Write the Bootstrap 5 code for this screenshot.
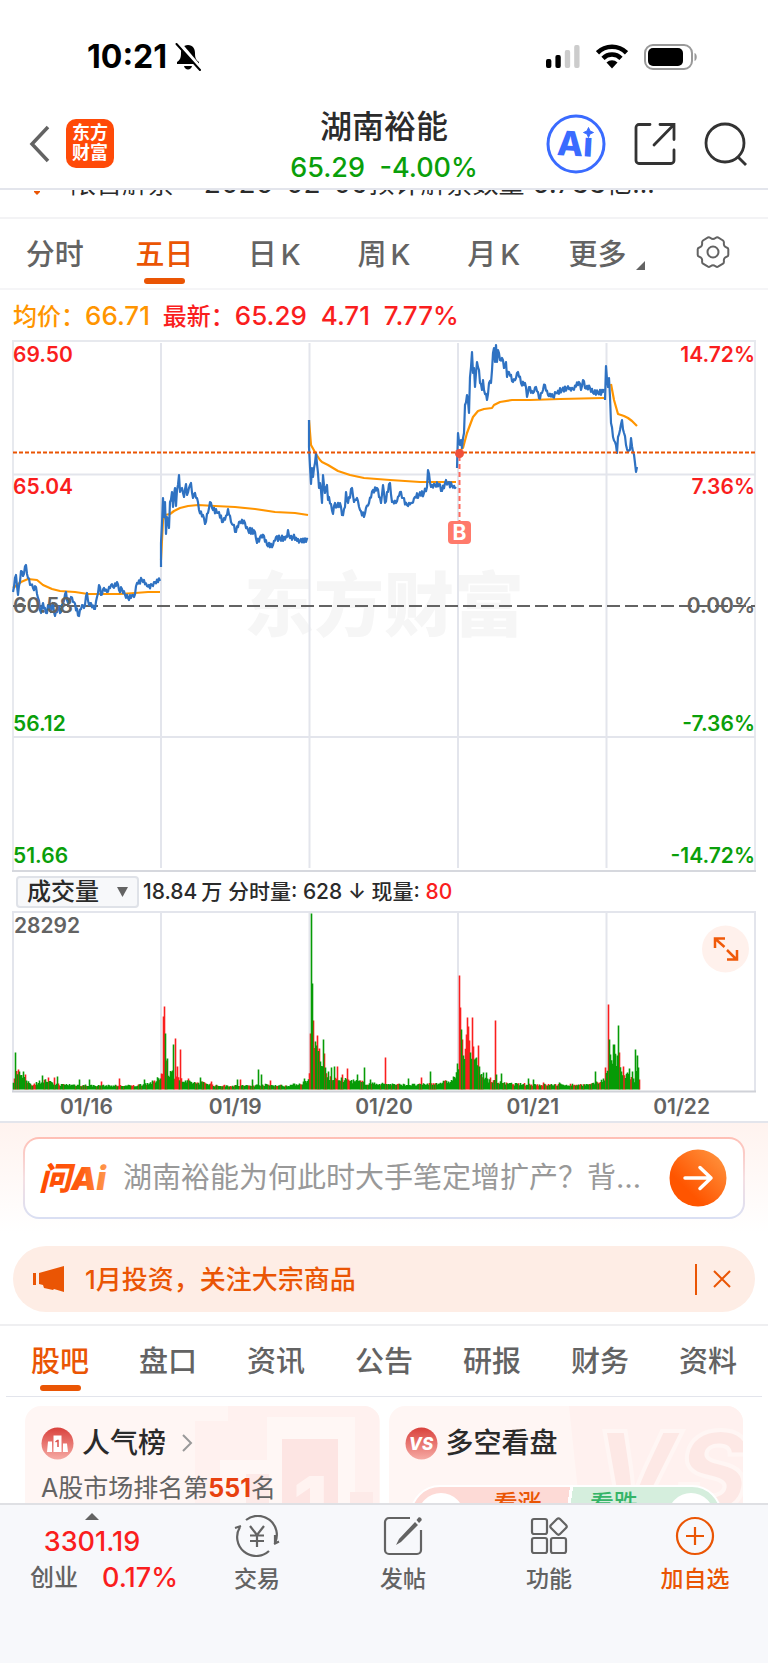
<!DOCTYPE html>
<html lang="zh-CN">
<head>
<meta charset="utf-8">
<meta name="viewport" content="width=device-width, initial-scale=1">
<title>湖南裕能</title>
<link href="https://cdn.jsdelivr.net/npm/bootstrap@5.3.0/dist/css/bootstrap.min.css" rel="stylesheet">
<style>
  :root { --brand: #ea5504; --rise: #fa1e1e; --fall: #0a9f0a; --ink: #2b2b2b; --muted: #636363; --rule: #e3e5ec; }
  body { font-family: Inter, "Noto Sans CJK SC", sans-serif; color: var(--ink); background: #fff; height: 100vh; }
  body > * { flex-shrink: 0; }
  a { text-decoration: none; color: inherit; }
  svg { display: block; flex: none; }
  .rise { color: var(--rise); }
  .fall { color: var(--fall); }
  .brand { color: var(--brand); }
  .status { height: 104px; padding: 10px 70px 0 87px; color: #000; }
  .clock { font-size: 32px; line-height: 40px; font-weight: 700; }
  .topbar { display: grid; grid-template-columns: 1fr auto 1fr; height: 86px; border-bottom: 2px solid var(--rule); padding: 0 20px; }
  .topbar .side { padding-bottom: 6px; }
  .applogo { width: 48px; height: 49px; border-radius: 10px; background: #ff4a08; color: #fff; font-size: 18px; line-height: 20px; font-weight: 700; text-align: center; padding-top: 4px; }
  .stock { font-size: 32px; line-height: 40px; font-weight: 500; margin: 3px 0 0; }
  .quote { font-size: 27px; line-height: 42px; font-weight: 500; white-space: pre; }
  .notice { height: 29px; overflow: hidden; border-bottom: 2px solid #f3f3f5; }
  .notice-text { font-size: 26px; line-height: 30px; margin-top: -22px; padding-left: 34px; white-space: pre; }
  .notice-text b { font-size: 28px; font-weight: 400; }
  .tabs { font-size: 29px; color: var(--muted); font-weight: 500; height: 71px; }
  .tabs a { flex: 1 1 0; text-align: center; line-height: 40px; padding-top: 16px; display: flex; flex-direction: column; align-items: center; }
  .tabs .on { color: var(--brand); }
  .tabs .on::after { content: ""; width: 41px; height: 6px; border-radius: 3px; background: var(--brand); margin-top: 3px; }
  .period { border-bottom: 2px solid #f5f5f7; }
  .legend-row { font-size: 24px; line-height: 52px; height: 50px; padding-left: 13px; font-weight: 500; white-space: pre; }
  .legend-row b { font-size: 26px; font-weight: 500; }
  .avg { color: #ff9500; }
  .plots { padding: 0 12px; }
  .plot { width: 100%; height: auto; }
  .plot text { font-family: Inter, "Noto Sans CJK SC", sans-serif; font-size: 21px; font-weight: 600; }
  .volbar { height: 39px; padding-left: 4px; font-size: 21px; font-weight: 500; white-space: pre; }
  .volbtn { font-size: 24px; line-height: 28px; font-weight: 500; width: 123px; height: 32px; padding: 0 9px; border: 2px solid #dfe2e8; border-radius: 4px; background: #f7f8fa; color: var(--ink); }
  .dates { line-height: 28px; font-size: 21px; font-weight: 600; color: var(--muted); }
  .dates span { flex: 1 1 0; text-align: center; }
  .ask { border-top: 2px solid var(--rule); background: linear-gradient(#fff3ef, #fff 110px); padding: 14px 23px 27px; }
  .askbox { height: 82px; border: 2px solid transparent; border-radius: 16px; padding: 0 16px 0 14px; background: linear-gradient(#fff, #fff) padding-box, linear-gradient(#ffbfb5, #f5dfe2 50%, #d9dff3) border-box; }
  .askbox input { border: 0; outline: 0; background: none; font-size: 29px; line-height: 40px; padding: 0; min-width: 0; }
  .askbox input::placeholder { color: #999; opacity: 1; }
  .plain { border: 0; background: none; padding: 0; }
  .promo { margin: 0 13px; height: 66px; border-radius: 33px; background: #feede5; color: var(--brand); padding: 0 24px 0 20px; font-size: 26px; font-weight: 500; }
  .promo .bar { width: 2px; height: 31px; background: var(--brand); }
  .sections { margin: 12px 0 0; border-top: 2px solid #efeff1; padding: 0 6px; }
  .sections .tabs { border-bottom: 1px solid var(--rule); }
  .feed { flex: 1 1 0; min-height: 0; padding: 9px 25px 0; gap: 9px; }
  .tile { flex: 1 1 0; height: 190px; border-radius: 16px; background: #fff6f4; position: relative; overflow: hidden; }
  .tile .art { position: absolute; inset: 0; }
  .tile-body { position: relative; padding: 17px 16px; }
  .tile h2 { font-size: 28px; line-height: 40px; font-weight: 500; margin: 0; }
  .rank { font-size: 25px; line-height: 34px; color: var(--muted); margin-top: 8px; }
  .rank b { color: #e8410f; }
  .vote { position: relative; margin: 22px 5px 0 5px; height: 60px; border: 2px solid #fff; border-radius: 30px; overflow: hidden; font-size: 24px; line-height: 34px; font-weight: 500; background: linear-gradient(98deg, #fddad6 50%, #fff 50%, #fff 51%, #d5eedd 51%); }
  .vote span { flex: 1 1 0; text-align: center; }
  .down { color: #35b467; }
  .knob { width: 46px; height: 46px; border-radius: 50%; background: #fff; margin: 6px; }
  .dock { background: #f7f8fb; border-top: 2px solid #dfe0e4; height: 160px; color: var(--muted); font-size: 24px; line-height: 36px; font-weight: 500; }
  .dock .index { flex: 184 1 0; }
  .dock .act { flex: 146 1 0; padding-top: 10px; gap: 4px; font-size: 23px; }
  .idxnum { font-size: 27px; }
</style>
</head>
<body class="d-flex flex-column overflow-hidden">
<div class="status d-flex align-items-center justify-content-between">
  <div class="d-flex align-items-center gap-2">
    <span class="clock">10:21</span>
    <svg width="27" height="28" viewBox="0 0 27 28"><path d="M13 2c-5 0-7 4-7 8 0 5-1 7-4 9v2h22v-2c-3-2-4-4-4-9 0-4-2-8-7-8z" fill="#000"/><path d="M9 23h8c-.5 2-2 3.500-4 3.500S9.500 25 9 23z" fill="#000"/><path d="M4 0l22 26" stroke="#fff" stroke-width="4"/><path d="M1.500 1L25 27" stroke="#000" stroke-width="2" stroke-linecap="round"/></svg>
  </div>
  <div class="d-flex align-items-center gap-3">
    <svg width="34" height="26" viewBox="0 0 38 26" preserveAspectRatio="none"><g><rect x="0" y="15" width="6" height="9" rx="2"/><rect x="10.500" y="11" width="6" height="13" rx="2"/><rect x="21" y="6" width="6" height="18" rx="2" fill="#ccc"/><rect x="31.500" y="1" width="6" height="23" rx="2" fill="#ccc"/></g></svg>
    <svg width="32" height="26" viewBox="0 0 32 26"><g fill="none" stroke="#000" stroke-width="4.500"><path d="M1.500 8.800a20.500 20.500 0 0 1 29 0"/><path d="M7 14.300a12.700 12.700 0 0 1 18 0"/></g><path d="M10.500 18.500a8 8 0 0 1 11 0L16 24.500z"/></svg>
    <svg width="54" height="26" viewBox="0 0 54 26"><rect x="1" y="1" width="47" height="24" rx="8" fill="none" stroke="#999" stroke-width="2"/><rect x="4" y="4" width="35" height="18" rx="5"/><path d="M50.500 9c3 1 3 7 0 8z" fill="#999"/></svg>
  </div>
</div>

<header class="topbar">
  <div class="side d-flex align-items-center gap-3 ps-2">
    <button class="plain" aria-label="返回"><svg width="22" height="38" viewBox="0 0 22 38"><path d="M20 2L4 19l16 17" fill="none" stroke="#636363" stroke-width="3.500"/></svg></button>
    <a href="#" class="applogo">东方<br>财富</a>
  </div>
  <div class="text-center">
    <h1 class="stock">湖南裕能</h1>
    <div class="quote fall">65.29  -4.00%</div>
  </div>
  <div class="side d-flex align-items-center justify-content-end">
    <button class="plain me-4" aria-label="Ai"><svg width="60" height="60" viewBox="0 0 60 60"><circle cx="30" cy="30" r="28" fill="#fff" stroke="#3a6bff" stroke-width="3"/><text x="29" y="42" text-anchor="middle" font-family="Inter" font-weight="800" font-size="34" fill="#3a6bff" transform="rotate(3 30 30)">Ai</text><circle cx="42" cy="17" r="6" fill="#fff"/><path d="M42.500 13.500l1.500 3.500 3.500 1.500-3.500 1.500-1.500 3.500-1.500-3.500-3.500-1.500 3.500-1.500z" fill="#3a6bff" stroke="#3a6bff"/></svg></button>
    <button class="plain me-4 ms-1" aria-label="分享"><svg width="42" height="44" viewBox="0 0 42 44"><path d="M16 2.500H5a3 3 0 0 0-3 3v33a3 3 0 0 0 3 3h32a3 3 0 0 0 3-3V28M26 2.500h14v15M40 2.500L20 23" fill="none" stroke="#333" stroke-width="2.800" stroke-linecap="round"/></svg></button>
    <button class="plain ms-1" aria-label="搜索"><svg width="44" height="44" viewBox="0 0 44 44"><g fill="none" stroke="#333" stroke-width="2.800"><circle cx="21" cy="21" r="19"/><path d="M34 35l8 8"/></g></svg></button>
  </div>
</header>

<div class="notice"><div class="notice-text d-flex align-items-end"><svg class="me-4" width="8" height="8" viewBox="0 0 8 8"><path d="M0 0h6v1L3 4 0 1z" fill="#ea5504"/></svg><span class="ms-1">限售解禁   <b> 2026-02-09</b>预计解禁数量<b> 5.733</b>亿…</span></div></div>

<nav class="tabs period d-flex">
  <a href="#">分时</a><a href="#" class="on">五日</a><a href="#"><span>日<span class="ms-1">K</span></span></a><a href="#"><span>周<span class="ms-1">K</span></span></a><a href="#"><span>月<span class="ms-1">K</span></span></a>
  <a href="#"><span class="d-flex align-items-end ms-2">更多<svg class="ms-2 mb-1" width="12" height="12" viewBox="0 0 12 12"><path d="M11 2v9H2z" fill="#636363"/></svg></span></a>
  <a href="#" aria-label="设置"><svg width="34" height="34" viewBox="0 0 34 34"><g fill="none" stroke="#636363" stroke-width="2"><path d="M12 2.500c2-1 2.500 1.500 5 1.500s3-2.500 5-1.500l5 3c2 1.500 0 3 1.300 5.300s4 1.200 4 3.500v5.600c0 2.300-2.700 1.200-4 3.500s.7 3.800-1.300 5.300l-5 3c-2 1-2.500-1.500-5-1.500s-3 2.500-5 1.500l-5-3c-2-1.500 0-3-1.300-5.300s-4-1.200-4-3.500v-5.600c0-2.300 2.700-1.200 4-3.500S5 7 7 5.500z"/><circle cx="17" cy="17" r="5.500"/></g></svg></a>
</nav>

<div class="legend-row"><span class="avg">均价：<b>66.71</b></span>  <span class="rise">最新：<b>65.29  4.71  7.77%</b></span></div>

<div class="plots">
  <svg class="plot" viewBox="12 340 744 532" id="price">
    <text x="384" y="631" text-anchor="middle" fill="#f6f6f6" style="font-size:70px;font-weight:900">东方财富</text>
    <g fill="none" stroke="#e3e5ec" stroke-width="2"><path d="M13 871V341H755V871" stroke="#e7e9ee"/><path d="M161 343V868M309.500 343V868M458 343V868M606.500 343V868M13 474.500H755M13 737H755"/><path d="M12 871H756" stroke="#d6d8de"/></g>
    <path d="M13 606H755" stroke="#636363" stroke-width="2" stroke-dasharray="13 5"/>
    <g id="lines" fill="none" stroke-width="2.200" stroke-linejoin="round"></g>
    <path d="M13 452.500H755" stroke="#ea5504" stroke-width="2" stroke-dasharray="4 2"/>
    <path d="M459.500 456V522" stroke="#ff6b5e" stroke-width="2" stroke-dasharray="5 3"/>
    <circle cx="459.500" cy="453.500" r="4.500" fill="#f0503a"/>
    <rect x="448" y="521" width="23" height="23" rx="4" fill="#ff7a6b"/>
    <text x="459.500" y="540" text-anchor="middle" fill="#fff" style="font-weight:700">B</text>
    <g fill="#fa1e1e"><text x="13" y="362">69.50</text><text x="13" y="494">65.04</text><g text-anchor="end"><text x="755" y="362">14.72%</text><text x="755" y="494">7.36%</text></g></g>
    <g fill="#636363"><text x="13" y="613">60.58</text><text x="755" y="613" text-anchor="end">0.00%</text></g>
    <g fill="#0a9f0a"><text x="13" y="731">56.12</text><text x="13" y="863">51.66</text><g text-anchor="end"><text x="755" y="731">-7.36%</text><text x="755" y="863">-14.72%</text></g></g>
  </svg>
  <div class="volbar d-flex align-items-center">
    <button class="volbtn d-flex align-items-center justify-content-between me-1">成交量<svg width="11" height="10" viewBox="0 0 11 10"><path d="M0 0h11L5.500 10z" fill="#636363"/></svg></button>
    <span>18.84<span class="ms-1">万</span> 分时量: 628 ↓ 现量: <span class="rise">80</span></span>
  </div>
  <svg class="plot" viewBox="12 911 744 182" id="volume">
    <g fill="none" stroke="#e3e5ec" stroke-width="2"><path d="M13 1091V912H755V1091"/><path d="M161 913V1089M309.500 913V1089M458 913V1089M606.500 913V1089"/><path d="M12 1091.500H756" stroke="#d0d2d8"/></g>
    <g id="bars"></g>
    <text x="14" y="933" fill="#636363">28292</text>
    <a href="#"><circle cx="725.500" cy="949" r="23.500" fill="#fff1ec"/><path d="M715 948v-9.500h10M715.500 939l9 8M737 950v9.500h-10M736 959l-9-9" fill="none" stroke="#f05a0a" stroke-width="2.500"/></a>
  </svg>
  <div class="dates d-flex"><span>01/16</span><span>01/19</span><span>01/20</span><span>01/21</span><span>01/22</span></div>
</div>

<div class="ask">
  <div class="askbox d-flex align-items-center">
    <svg width="68" height="36" viewBox="0 0 68 36"><defs><linearGradient id="warm"><stop offset="0" stop-color="#ff4a00"/><stop offset=".6" stop-color="#ff5a10"/><stop offset="1" stop-color="#ff9a50"/></linearGradient></defs><text x="0" y="30" fill="url(#warm)" font-size="32" font-weight="900" font-style="italic" font-family="Inter, 'Noto Sans CJK SC', sans-serif">问Ai</text></svg>
    <input class="flex-fill ms-3 me-4" aria-label="问Ai" placeholder="湖南裕能为何此时大手笔定增扩产？背…">
    <button class="plain" aria-label="发送"><svg width="58" height="58" viewBox="0 0 58 58"><defs><linearGradient id="go" x1="0" y1="1" x2="1" y2="0"><stop offset=".3" stop-color="#ff5500"/><stop offset="1" stop-color="#ff9a45"/></linearGradient></defs><circle cx="29" cy="29" r="28.500" fill="url(#go)"/><path d="M16 29h26M31 18.500L42 29 31 39.500" fill="none" stroke="#fff" stroke-width="3.500" stroke-linecap="round" stroke-linejoin="round"/></svg></button>
  </div>
</div>

<div class="promo d-flex align-items-center">
  <svg width="32" height="28" viewBox="0 0 32 28"><path d="M0 8h3v12H0zM6 8L31 1v26l-10-3-1 1-9-2-1-3-4-1z" fill="#ea5504"/></svg>
  <a href="#" class="ms-3 ps-1 flex-fill">1月投资，关注大宗商品</a>
  <span class="bar me-3"></span>
  <button class="plain" aria-label="关闭"><svg width="18" height="18" viewBox="0 0 18 18"><path d="M1 1l16 16M17 1L1 17" stroke="#ea5504" stroke-width="2"/></svg></button>
</div>

<div class="sections">
  <nav class="tabs d-flex"><a href="#" class="on">股吧</a><a href="#">盘口</a><a href="#">资讯</a><a href="#">公告</a><a href="#">研报</a><a href="#">财务</a><a href="#">资料</a></nav>
</div>

<main class="feed d-flex overflow-hidden">
  <section class="tile">
    <svg class="art" width="354" height="190" viewBox="0 0 354 190"><path d="M203 0H354V190H170V15H203z" fill="#fff1ef"/><path d="M242 190V11H330V190M195 190V54H242V190" fill="#fff7f5"/><path d="M257 33H313V190H257z" fill="#fde5e3"/><path d="M221 68H244V190H221zM325 86H348V190H325z" fill="#fdeae8"/><text x="268" y="128" font-family="Inter" font-weight="800" font-size="80" fill="#fff3f1">1</text></svg>
    <div class="tile-body">
      <div class="d-flex align-items-center">
        <svg width="33" height="33" viewBox="0 0 33 33"><defs><linearGradient id="rose" x2="0" y2="1"><stop stop-color="#d9413c"/><stop offset="1" stop-color="#f6aaa4"/></linearGradient></defs><circle cx="16.500" cy="16.500" r="16" fill="url(#rose)"/><path d="M7 14.500h4V25H6zM12.500 8.500h8V25h-8zM22 16.500h4l1 8.500h-5z" fill="#fff"/><path d="M14.500 15l2-1.500h.5V20" stroke="#d9524c" stroke-width="1.500" fill="none"/></svg>
        <h2 class="ms-2">人气榜</h2>
        <svg class="ms-3" width="11" height="18" viewBox="0 0 11 18"><path d="M1 1l8 8-8 8" fill="none" stroke="#999" stroke-width="2"/></svg>
      </div>
      <div class="rank">A股市场排名第<b>551</b>名</div>
    </div>
  </section>
  <section class="tile">
    <svg class="art" width="354" height="190" viewBox="0 0 354 190"><path d="M180 0H354V190H200z" fill="#fff1ef"/><text x="205" y="104" font-family="Inter" font-weight="800" font-style="italic" font-size="108" fill="#fde8e5" stroke="#fff6f4" stroke-width="4">VS</text></svg>
    <div class="tile-body">
      <div class="d-flex align-items-center">
        <svg width="33" height="33" viewBox="0 0 33 33"><circle cx="16.500" cy="16.500" r="16" fill="url(#rose)"/><text x="16" y="23" text-anchor="middle" font-family="Inter" font-weight="800" font-style="italic" font-size="17" fill="#fff">VS</text></svg>
        <h2 class="ms-2">多空看盘</h2>
      </div>
      <div class="vote d-flex"><i class="knob"></i><span class="brand">看涨</span><span class="down">看跌</span><i class="knob"></i></div>
    </div>
  </section>
</main>

<footer class="dock d-flex">
  <a href="#" class="index d-flex flex-column align-items-center">
    <svg class="mt-2" width="14" height="7" viewBox="0 0 14 7"><path d="M7 0l7 7H0z" fill="#636363"/></svg>
    <span class="idxnum rise mt-1">3301.19</span>
    <span class="d-flex ms-4">创业<span class="idxnum rise ms-4">0.17%</span></span>
  </a>
  <a href="#" class="act d-flex flex-column align-items-center"><svg width="46" height="42" viewBox="0 0 46 42"><g fill="none" stroke="#636363" stroke-width="2.200"><path d="M12 5a19 19 0 0 1 29 23M35 36A19 19 0 0 1 6 12M1 13l6-2M40 29l5-2.500M41 28v-8"/><path d="M16 11l7 9 7-9M23 20v12M16 20.500h14M16 26h14"/></g></svg>交易</a>
  <a href="#" class="act d-flex flex-column align-items-center"><svg width="40" height="42" viewBox="0 0 40 42"><path d="M27 3H6a4 4 0 0 0-4 4v28a4 4 0 0 0 4 4h28a4 4 0 0 0 4-4V15" fill="none" stroke="#636363" stroke-width="2.200"/><path d="M32 7l3 3-17 17-5 3 3-6zM33.500 5l2-2.500c1.500-1 4 1 3 3L36 8z" fill="#636363"/></svg>发帖</a>
  <a href="#" class="act d-flex flex-column align-items-center"><svg width="38" height="42" viewBox="0 0 38 42"><g fill="none" stroke="#636363" stroke-width="2.200"><rect x="2" y="4" width="15" height="15" rx="2"/><rect x="2" y="23" width="15" height="15" rx="2"/><rect x="21" y="23" width="15" height="15" rx="2"/><path d="M27 4q1.500-1.500 3 0l6 6q1.500 1.500 0 3l-6 6q-1.500 1.500-3 0l-6-6q-1.500-1.500 0-3z"/></g></svg>功能</a>
  <a href="#" class="act brand d-flex flex-column align-items-center"><svg width="40" height="42" viewBox="0 0 40 42"><g fill="none" stroke="#ea5504" stroke-width="2.200"><circle cx="20" cy="21" r="18"/><path d="M11 21h18M20 12v18"/></g></svg>加自选</a>
</footer>

<script src="https://cdn.jsdelivr.net/npm/bootstrap@5.3.0/dist/js/bootstrap.bundle.min.js"></script>
<script>
  const NS = 'http://www.w3.org/2000/svg';
  let seed = 7;
  const rnd = () => (seed = (seed * 16807) % 2147483647) / 2147483647;
  const parse = s => s.trim().split(' ').map(p => p.split(',').map(Number));
  const add = (id, d, color, width) => {
    const p = document.createElementNS(NS, 'path');
    p.setAttribute('d', d); p.setAttribute('stroke', color);
    if (width) p.setAttribute('stroke-width', width);
    document.getElementById(id).appendChild(p);
  };

  // Average price, one line per trading day
  ['13,588 21,582 28,579 37,580 43,585 52,589 60,591 75,592 88,594 105,594 120,594 135,593 148,592 160,592',
   '161,560 163,520 165,515 170,514 174,511 180,508 188,506 198,505 215,506 235,507 255,509 275,512 295,513 308,515',
   '309,420 311,445 316,454 320,460 322,462 328,465 338,471 350,475 364,478 390,480 420,482 456,482',
   '458,452 463,448 467,433 470,425 473,417 478,411 484,409 492,408 494,405 500,402 512,400 530,400 560,399 604,398',
   '611,384 614,400 618,414 624,416 628,418 632,421 637,426'
  ].forEach(s => add('lines', 'M' + s, '#ff9500'));

  // Latest price, one line per trading day, with the tick-by-tick jitter between the turning points
  ['13,592 16,575 18,595 21,571 23,576 26,565 28,578 31,585 33,588 36,587 38,598 41,613 43,603 46,613 49,605 51,612 53,603 55,616 58,607 61,612 63,603 66,592 68,603 71,597 74,602 79,616 82,605 84,608 87,593 89,605 91,603 95,609 97,597 99,585 101,595 104,588 107,592 111,585 113,587 117,582 119,590 122,589 125,595 128,598 132,595 134,597 137,583 142,580 147,586 152,585 155,582 160,581',
   '161,567 161,543 163,498 164,517 165,502 166,534 167,517 169,528 170,502 172,492 173,507 175,488 176,506 177,490 179,475 180,492 182,488 184,497 186,484 187,495 190,485 191,483 193,498 195,493 197,498 199,510 203,515 205,524 208,513 210,502 213,510 218,513 223,522 227,515 228,509 231,522 233,525 236,532 239,522 245,523 248,530 255,532 257,543 260,537 264,536 267,545 273,545 276,537 280,539 287,537 288,530 290,538 293,537 300,541 308,539',
   '309,420 309,447 311,484 312,468 313,477 315,463 316,453 318,473 319,488 320,483 322,503 323,475 325,493 327,485 328,500 329,497 333,514 335,503 337,507 340,503 342,515 345,507 346,492 348,503 352,488 354,502 357,498 360,510 364,517 366,508 369,503 373,490 377,488 381,503 383,485 385,503 390,483 392,502 396,503 400,492 403,498 407,505 412,503 415,497 419,495 424,493 427,487 428,470 431,487 435,485 439,484 442,491 445,483 448,483 452,486 456,487',
   '457,468 458,433 460,445 461,440 462,448 464,433 465,405 467,395 469,413 470,377 472,352 473,373 474,368 475,387 477,362 479,370 480,383 482,390 483,380 484,390 487,400 489,383 491,383 493,353 494,348 495,362 496,345 497,362 498,350 500,360 502,358 504,368 506,362 507,377 509,372 513,382 516,378 518,372 521,383 525,383 527,397 529,387 533,393 536,387 539,398 543,390 545,385 548,395 553,397 556,393 562,390 567,388 573,389 579,382 581,390 583,380 585,388 590,388 593,393 598,393 603,392 604,389',
   '605,400 606,366 608,387 609,378 610,397 611,423 613,437 615,442 617,453 618,437 620,430 622,420 624,433 626,445 628,452 630,450 631,438 633,452 635,463 636,472 637,467'
  ].forEach(s => {
    const pts = parse(s);
    let d = 'M' + pts[0], flip = 1;
    for (let i = 1; i < pts.length; i++) {
      const [x0, y0] = pts[i - 1], [x1, y1] = pts[i];
      for (let x = x0 + 1; x < x1; x++) {
        const y = y0 + (y1 - y0) * (x - x0) / (x1 - x0) + flip * (0.5 + rnd() * 2.5);
        d += 'L' + x + ',' + y.toFixed(1);
        flip = -flip;
      }
      d += 'L' + x1 + ',' + y1;
    }
    add('lines', d, '#2f72c2');
  });

  // Volume: the general level, then the bars that stand out (x, height, 1 = rise)
  const level = parse('13,6 15,20 20,14 26,9 32,5 42,9 48,9 52,6 60,5 70,5 95,4 115,4 135,4 145,6 155,8 162,16 165,45 168,18 172,17 178,12 184,8 195,7 205,7 215,4 230,4 250,4 262,5 285,4 300,6 308,10 312,60 315,45 320,27 325,15 330,12 340,11 350,9 360,8 368,6 385,6 400,5 420,5 440,7 453,9 458,20 460,60 464,35 470,35 476,25 481,14 490,9 505,6 540,5 560,5 590,5 600,8 606,15 609,35 618,28 622,12 628,15 634,9 637,20 639,8');
  const peaks = parse('15,37,0 18,20,1 19,18,0 23,18,0 25,15,1 42,14,0 48,12,1 54,12,1 57,13,0 79,10,0 89,10,0 101,8,1 119,11,1 144,10,0 161,16,1 163,73,1 164,83,1 165,56,0 167,31,0 173,45,0 175,51,1 177,23,1 180,40,1 188,11,1 200,12,0 211,8,1 237,10,0 240,10,1 252,10,0 258,20,0 261,15,0 270,9,1 304,11,0 310,56,1 311,176,0 312,106,0 313,69,1 315,48,0 316,44,0 317,54,1 319,41,1 320,28,0 323,50,0 324,36,1 325,22,0 328,18,0 331,22,0 334,23,0 337,23,1 342,15,1 347,21,1 357,15,0 364,22,0 370,10,0 385,32,1 408,11,0 421,12,1 430,18,0 453,13,0 457,26,0 459,114,1 460,82,1 461,60,0 462,50,1 463,34,0 466,55,1 467,72,1 468,63,1 469,49,1 470,37,0 472,72,1 473,43,1 475,31,0 476,32,0 478,44,1 479,23,0 483,17,0 486,17,0 490,12,1 495,69,1 496,15,0 501,16,0 528,11,0 533,10,0 543,7,1 559,7,0 595,18,0 605,22,1 608,85,1 609,50,0 610,35,0 613,45,0 614,45,0 618,64,0 619,37,1 621,18,0 623,23,1 627,17,0 629,21,0 632,18,0 635,40,0 637,34,0 638,22,0 639,10,1');
  const fixed = new Map(peaks.map(p => [p[0], p]));
  let up = '', down = '', k = 0;
  for (let x = 13; x < 640; x++) {
    while (k < level.length - 2 && level[k + 1][0] < x) k++;
    const [xa, ha] = level[k], [xb, hb] = level[k + 1];
    let h = (ha + (hb - ha) * (x - xa) / (xb - xa)) * (0.7 + rnd() * 0.5), red = rnd() < 0.25;
    if (fixed.has(x)) { h = fixed.get(x)[1]; red = fixed.get(x)[2] === 1; }
    const seg = 'M' + (x + 0.5) + ' 1089.500v-' + Math.max(2, h).toFixed(1);
    if (red) up += seg; else down += seg;
  }
  add('bars', up, '#fa1e1e', 1.6);
  add('bars', down, '#069b06', 1.6);
</script>
</body>
</html>
